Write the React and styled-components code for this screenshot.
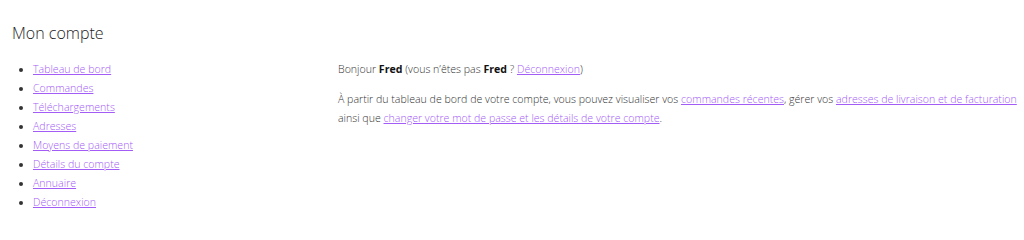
import React from "react";
import styled, { createGlobalStyle } from "styled-components";

const GlobalStyle = createGlobalStyle`
  body {
    margin: 0;
    background: #fff;
    font-family: "Open Sans", "Liberation Sans", sans-serif;
    font-weight: 300;
    color: #333;
  }
`;

const Page = styled.div`
  padding: 20px 4px 0 12px;
`;

const Title = styled.h1`
  margin: 0 0 14px;
  font-size: 16px;
  font-weight: 300;
  line-height: 26px;
  color: #222;
`;

const Columns = styled.div`
  display: grid;
  grid-template-columns: 326px 1fr;
`;

const Menu = styled.ul`
  margin: 0;
  padding-left: 21px;
  font-size: 10.6px;
  line-height: 19px;
`;

const Link = styled.a`
  color: #a35cf5;
  text-decoration: underline;
`;

const Content = styled.div`
  font-size: 10.6px;
  line-height: 19px;
`;

const Para = styled.p`
  margin: 0 0 11px;
`;

const Name = styled.strong`
  font-weight: 700;
  color: #111;
`;

const items = [
  "Tableau de bord",
  "Commandes",
  "Téléchargements",
  "Adresses",
  "Moyens de paiement",
  "Détails du compte",
  "Annuaire",
  "Déconnexion",
];

export default () => {
  return (
    <>
      <GlobalStyle />
      <Page>
        <Title>Mon compte</Title>
        <Columns>
          <Menu>
            {items.map((item) => (
              <li key={item}>
                <Link href="#">{item}</Link>
              </li>
            ))}
          </Menu>
          <Content>
            <Para>
              Bonjour <Name>Fred</Name> (vous n’êtes pas <Name>Fred</Name> ?{" "}
              <Link href="#">Déconnexion</Link>)
            </Para>
            <Para>
              À partir du tableau de bord de votre compte, vous pouvez visualiser vos{" "}
              <Link href="#">commandes récentes</Link>, gérer vos{" "}
              <Link href="#">adresses de livraison et de facturation</Link> ainsi que{" "}
              <Link href="#">changer votre mot de passe et les détails de votre compte</Link>.
            </Para>
          </Content>
        </Columns>
      </Page>
    </>
  );
};
